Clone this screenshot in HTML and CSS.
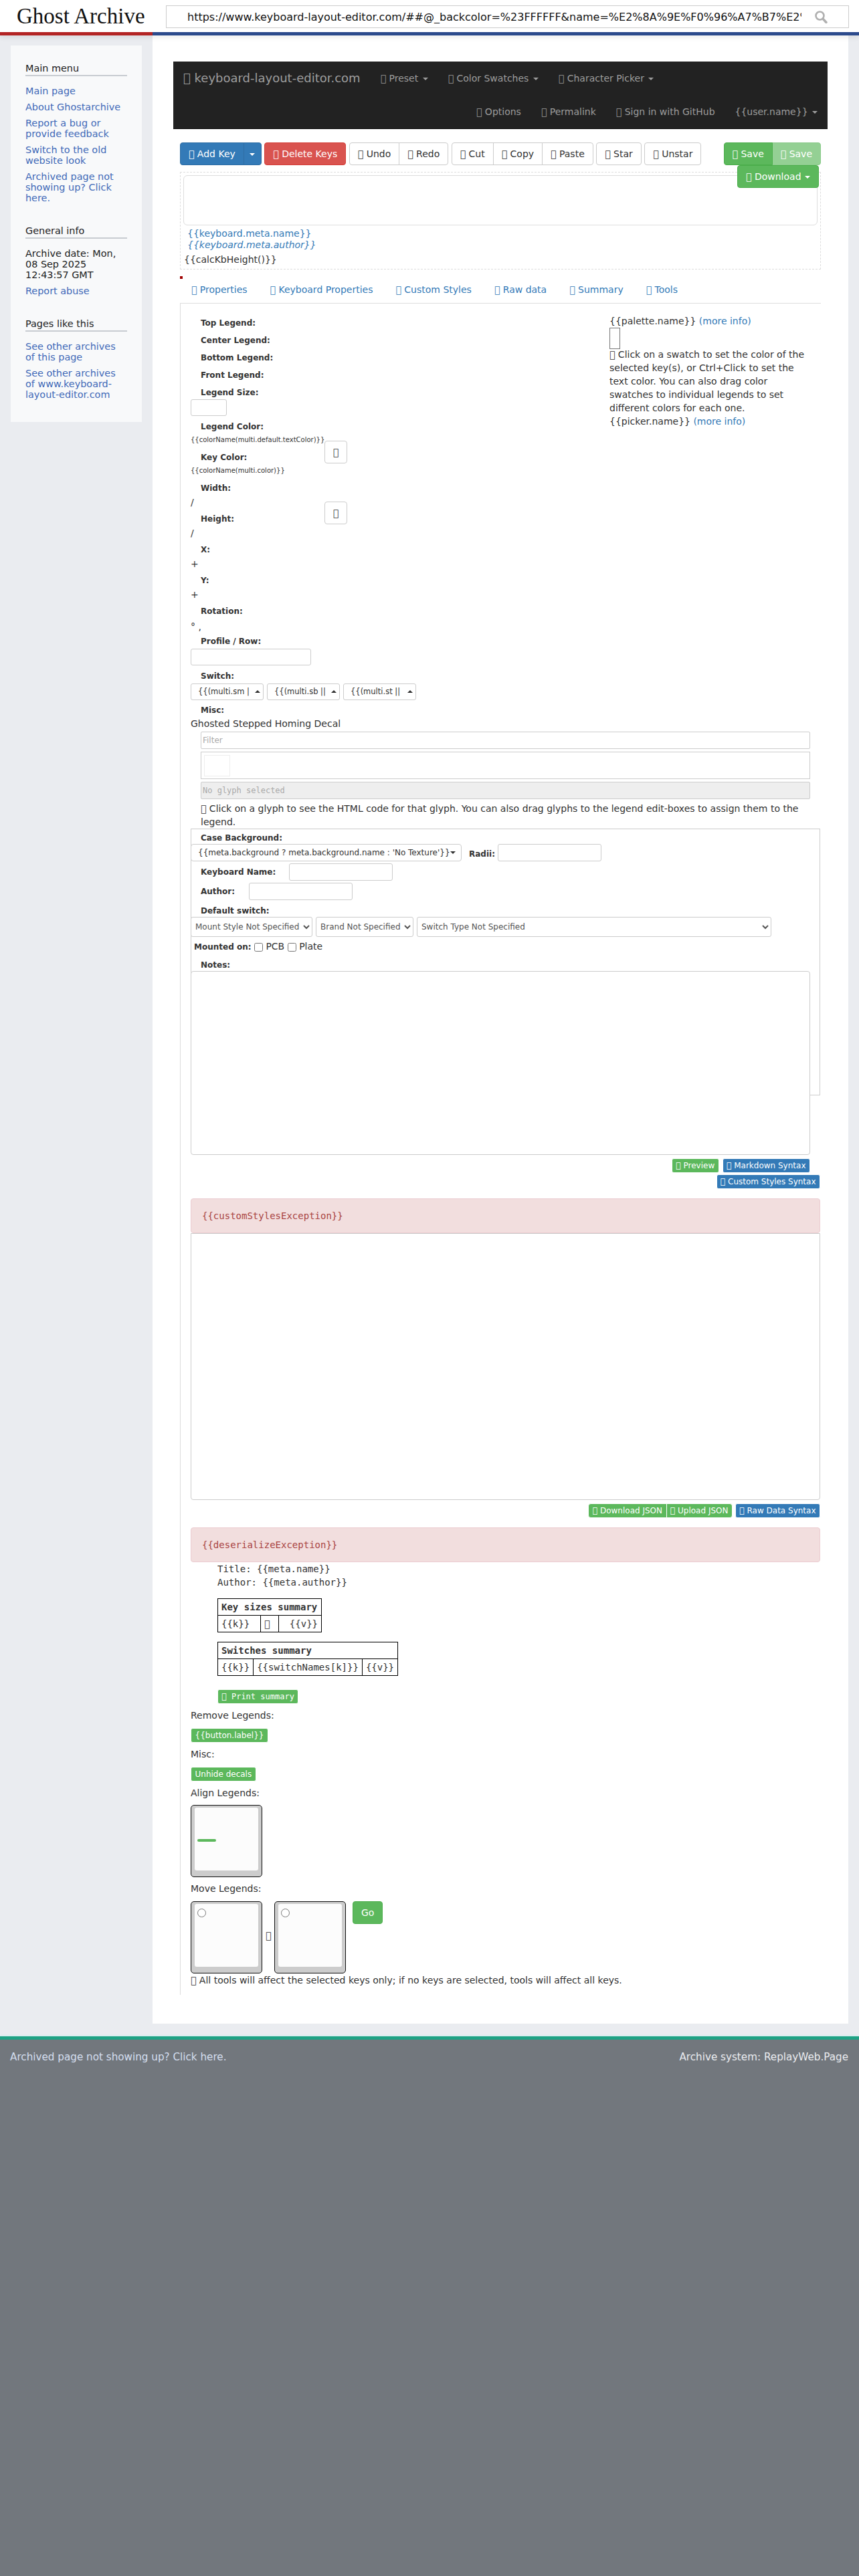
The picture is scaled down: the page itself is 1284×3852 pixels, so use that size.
FILE: index.html
```html
<!DOCTYPE html>
<html lang="en">
<head>
<meta charset="utf-8">
<title>Ghost Archive</title>
<link rel="stylesheet" href="styles.css">
</head>
<body>
<header class="topbar">
  <div class="logo">Ghost Archive</div>
  <div class="search">
    <input class="search-input" type="text" value="https://www.keyboard-layout-editor.com/##@_backcolor=%23FFFFFF&amp;name=%E2%8A%9E%F0%96%A7%B7%E2%8A%9E%F0%96%A7%B7%E2%8A%9E%F0%96%A7%B7%E2%8A%9E">
    <svg class="search-icon" width="20" height="20" viewBox="0 0 20 20"><circle cx="8.5" cy="8.5" r="6" fill="none" stroke="#b0b0b0" stroke-width="2.6"/><path d="M13 13l5 5.5" stroke="#b0b0b0" stroke-width="3.4" stroke-linecap="round"/></svg>
  </div>
</header>
<div class="shell">
  <aside class="sidebar">
    <div class="card">
      <h3 class="side-h">Main menu</h3>
      <ul class="side-list">
        <li><a>Main page</a></li>
        <li><a>About Ghostarchive</a></li>
        <li><a>Report a bug or provide feedback</a></li>
        <li><a>Switch to the old website look</a></li>
        <li><a>Archived page not showing up? Click here.</a></li>
      </ul>
      <h3 class="side-h">General info</h3>
      <ul class="side-list">
        <li>Archive date: Mon, 08 Sep 2025 12:43:57 GMT</li>
        <li><a>Report abuse</a></li>
      </ul>
      <h3 class="side-h">Pages like this</h3>
      <ul class="side-list">
        <li><a>See other archives of this page</a></li>
        <li><a>See other archives of www.keyboard-layout-editor.com</a></li>
      </ul>
    </div>
  </aside>
  <main class="content">
    <nav class="navbar">
      <div class="nav-row">
        <span class="brand">&#xe001; keyboard-layout-editor.com</span>
        <span>&#xe001; Preset <i class="caret"></i></span>
        <span>&#xe001; Color Swatches <i class="caret"></i></span>
        <span>&#xe001; Character Picker <i class="caret"></i></span>
      </div>
      <div class="nav-row nav-right">
        <span>&#xe001; Options</span>
        <span>&#xe001; Permalink</span>
        <span>&#xe001; Sign in with GitHub</span>
        <span>{{user.name}} <i class="caret"></i></span>
      </div>
    </nav>
    <div class="work">
      <div class="toolbar">
        <div class="group">
          <button class="btn primary">&#xe001; Add Key</button><button class="btn primary split"><i class="caret"></i></button>
        </div>
        <button class="btn danger">&#xe001; Delete Keys</button>
        <div class="group">
          <button class="btn">&#xe001; Undo</button><button class="btn">&#xe001; Redo</button>
        </div>
        <div class="group">
          <button class="btn">&#xe001; Cut</button><button class="btn">&#xe001; Copy</button><button class="btn">&#xe001; Paste</button>
        </div>
        <button class="btn">&#xe001; Star</button>
        <button class="btn">&#xe001; Unstar</button>
        <div class="group save-group">
          <button class="btn success">&#xe001; Save</button><button class="btn success faded">&#xe001; Save</button>
        </div>
      </div>
      <div class="download-row"><button class="btn success">&#xe001; Download <i class="caret"></i></button></div>
      <div class="kb-wrap">
        <div class="kb"></div>
        <div class="meta-name">{{keyboard.meta.name}}</div>
        <div class="meta-author">{{keyboard.meta.author}}</div>
        <div class="calc">{{calcKbHeight()}}</div>
      </div>
      <div class="red-dot"></div>
      <div class="tabs">
        <a>&#xe001; Properties</a>
        <a>&#xe001; Keyboard Properties</a>
        <a>&#xe001; Custom Styles</a>
        <a>&#xe001; Raw data</a>
        <a>&#xe001; Summary</a>
        <a>&#xe001; Tools</a>
      </div>
      <div class="panel">
        <div class="props">
          <div class="props-left">
            <div class="lab">Top Legend:</div>
            <div class="lab">Center Legend:</div>
            <div class="lab">Bottom Legend:</div>
            <div class="lab">Front Legend:</div>
            <div class="lab">Legend Size:</div>
            <input class="field size-field" type="text">
            <div class="colors">
              <div class="colors-left">
                <div class="lab">Legend Color:</div>
                <div class="color-name">{{colorName(multi.default.textColor)}}</div>
                <div class="lab lab-key">Key Color:</div>
                <div class="color-name">{{colorName(multi.color)}}</div>
                <div class="lab lab-w">Width:</div>
                <div class="unit">/</div>
                <div class="lab lab-h">Height:</div>
                <div class="unit">/</div>
                <div class="lab lab-h">X:</div>
                <div class="unit">+</div>
                <div class="lab lab-h">Y:</div>
                <div class="unit">+</div>
                <div class="lab lab-h">Rotation:</div>
                <div class="unit rot">° ,</div>
              </div>
              <div class="colors-right">
                <button class="btn icon-btn">&#xe001;</button>
                <button class="btn icon-btn second">&#xe001;</button>
              </div>
            </div>
            <div class="lab">Profile / Row:</div>
            <input class="field profile-field" type="text">
            <div class="lab">Switch:</div>
            <div class="switch-row">
              <button class="drop">{{(multi.sm |<i class="caret up"></i></button>
              <button class="drop">{{(multi.sb ||<i class="caret up"></i></button>
              <button class="drop">{{(multi.st ||<i class="caret up"></i></button>
            </div>
            <div class="lab lab-misc">Misc:</div>
          </div>
          <div class="props-right">
            <div>{{palette.name}} <a class="info">(more info)</a></div>
            <div class="swatch"></div>
            <div>&#xe001; Click on a swatch to set the color of the selected key(s), or Ctrl+Click to set the text color. You can also drag color swatches to individual legends to set different colors for each one.</div>
            <div>{{picker.name}} <a class="info">(more info)</a></div>
          </div>
        </div>
        <div class="decal">Ghosted Stepped Homing Decal</div>
        <div class="glyphs">
          <input class="field filter" type="text" placeholder="Filter">
          <div class="glyph-box"><div class="glyph-cell"></div></div>
          <input class="field noglyph" type="text" placeholder="No glyph selected" disabled>
          <div class="glyph-note">&#xe001; Click on a glyph to see the HTML code for that glyph. You can also drag glyphs to the legend edit-boxes to assign them to the legend.</div>
        </div>
        <div class="kprops">
          <div class="lab">Case Background:</div>
          <div class="case-row">
            <button class="drop case-drop">{{meta.background ? meta.background.name : 'No Texture'}}<i class="caret"></i></button>
            <span class="inline-lab radii">Radii:</span>
            <input class="field medium" type="text">
          </div>
          <div class="name-row name-kb"><span class="inline-lab">Keyboard Name:</span><input class="field medium" type="text"></div>
          <div class="name-row name-au"><span class="inline-lab">Author:</span><input class="field medium" type="text"></div>
          <div class="lab lab-default">Default switch:</div>
          <div class="select-row">
            <select class="sel sel-a"><option>Mount Style Not Specified</option></select>
            <select class="sel sel-b"><option>Brand Not Specified</option></select>
            <select class="sel sel-c"><option>Switch Type Not Specified</option></select>
          </div>
          <div class="mounted"><b>Mounted on:</b> <input type="checkbox"> PCB <input type="checkbox"> Plate</div>
          <div class="lab lab-notes">Notes:</div>
          <textarea class="notes"></textarea>
        </div>
        <div class="btn-row row-preview">
          <button class="xs success">&#xe001; Preview</button>
          <button class="xs primary">&#xe001; Markdown Syntax</button>
        </div>
        <div class="btn-row row-custom">
          <button class="xs primary">&#xe001; Custom Styles Syntax</button>
        </div>
        <div class="alert alert-a">{{customStylesException}}</div>
        <textarea class="styles"></textarea>
        <div class="btn-row row-raw">
          <div class="group">
            <button class="xs success">&#xe001; Download JSON</button><button class="xs success">&#xe001; Upload JSON</button>
          </div>
          <button class="xs primary">&#xe001; Raw Data Syntax</button>
        </div>
        <div class="alert alert-b">{{deserializeException}}</div>
        <div class="summary">
          <div>Title: {{meta.name}}</div>
          <div>Author: {{meta.author}}</div>
          <table class="sum-table t-keys">
            <tr><th colspan="3">Key sizes summary</th></tr>
            <tr><td class="c-k">{{k}}</td><td class="c-i">&#xe001;</td><td class="c-v">{{v}}</td></tr>
          </table>
          <table class="sum-table t-switch">
            <tr><th colspan="3">Switches summary</th></tr>
            <tr><td>{{k}}</td><td>{{switchNames[k]}}</td><td>{{v}}</td></tr>
          </table>
          <button class="xs success print">&#xe001; Print summary</button>
        </div>
        <div class="tool-h">Remove Legends:</div>
        <button class="xs success tool-btn">{{button.label}}</button>
        <div class="tool-h">Misc:</div>
        <button class="xs success tool-btn">Unhide decals</button>
        <div class="tool-h">Align Legends:</div>
        <div class="key"><div class="key-top"><div class="align-bar"></div></div></div>
        <div class="tool-h">Move Legends:</div>
        <div class="move-row">
          <div class="key"><div class="key-top"><input class="radio" type="radio"></div></div>
          <span class="arrow">&#xe001;</span>
          <div class="key"><div class="key-top"><input class="radio" type="radio"></div></div>
          <button class="btn success go">Go</button>
        </div>
        <div class="tool-note">&#xe001; All tools will affect the selected keys only; if no keys are selected, tools will affect all keys.</div>
      </div>
    </div>
  </main>
</div>
<footer class="footer">
  <a class="foot-link">Archived page not showing up? Click here.</a>
  <span class="foot-right">Archive system: ReplayWeb.Page</span>
</footer>
</body>
</html>
```
FILE: styles.css
```css
* { box-sizing: border-box; }
html, body { margin: 0; padding: 0; }
body {
  min-height: 3852px;
  display: flex;
  flex-direction: column;
  background: #eaecf0;
  color: #333;
  font: 14px/20px "DejaVu Sans", sans-serif;
}
a { color: #337ab7; }
button, input, select, textarea { font-family: "DejaVu Sans", sans-serif; }
input::placeholder { color: #aaa; }

/* top bar */
.topbar {
  height: 53px;
  display: flex;
  background: #fff;
  border-bottom: 5px solid #2c4a8c;
  position: relative;
  box-shadow: 0 3px 8px rgba(0,0,0,.08);
}
.topbar::after {
  content: "";
  position: absolute;
  left: 0;
  bottom: -5px;
  width: 228px;
  height: 5px;
  background: #b32424;
}
.logo {
  width: 248px;
  padding-left: 25px;
  font: 33px/48px "Liberation Serif", serif;
  color: #111;
  white-space: nowrap;
}
.search { position: relative; width: 1021px; margin-top: 8px; height: 34px; }
.search-input {
  width: 100%;
  height: 34px;
  border: 1px solid #ccc;
  padding: 0 70px 0 31px;
  font-size: 16px;
  color: #111;
  background: #fff;
}
.search-icon { position: absolute; right: 32px; top: 7px; }

/* shell */
.shell { display: grid; grid-template-columns: 228px 1040px; }
.sidebar { padding: 15px 0 0 16px; }
.card {
  width: 196px;
  height: 563px;
  background: #f8f9fa;
  padding: 26px 22px 0;
  color: #202122;
}
.side-h {
  margin: 0 0 14px;
  font-size: 14.4px;
  font-weight: 400;
  line-height: 16px;
  padding-bottom: 2px;
  border-bottom: 2px solid #c8ccd1;
  color: #202122;
}
.side-list { list-style: none; margin: 0; padding: 0 0 25px; font-size: 14.4px; line-height: 16px; }
.side-list li { margin-bottom: 8px; }
.side-list a { color: #4169b8; }

.content { background: #fff; padding: 39px 0 45px 31px; height: 2973px; }

/* navbar */
.navbar {
  width: 978px;
  height: 101px;
  background: #222;
  border-bottom: 1px solid #080808;
  color: #9d9d9d;
}
.nav-row { height: 50px; display: flex; align-items: center; gap: 30px; padding: 0 15px; }
.nav-right { justify-content: flex-end; }
.brand { font-size: 18px; }
.caret {
  display: inline-block;
  width: 0;
  height: 0;
  margin-left: 2px;
  vertical-align: middle;
  border-top: 4px solid currentColor;
  border-left: 4px solid transparent;
  border-right: 4px solid transparent;
}
.caret.up { border-top: 0; border-bottom: 4px solid currentColor; }

/* buttons */
.work { width: 968px; padding-left: 10px; }
.btn {
  height: 34px;
  padding: 6px 12px;
  font-size: 14px;
  line-height: 20px;
  color: #333;
  background: #fff;
  border: 1px solid #ccc;
  border-radius: 4px;
  white-space: nowrap;
}
.primary { background: #337ab7; border-color: #2e6da4; color: #fff; }
.danger { background: #d9534f; border-color: #d43f3a; color: #fff; }
.success { background: #5cb85c; border-color: #4cae4c; color: #fff; }
.faded { opacity: .65; }
.group { display: flex; }
.group > * { border-radius: 0; margin-left: -1px; }
.group > *:first-child { border-radius: 4px 0 0 4px; margin-left: 0; }
.group > *:last-child { border-radius: 0 4px 4px 0; }
.split { width: 27px; padding: 0; }
.split .caret { margin-left: 0; }
.toolbar { display: flex; gap: 4.5px; margin-top: 20px; }
.save-group { margin-left: auto; }
.download-row {
  display: flex;
  justify-content: flex-end;
  padding-right: 3px;
  height: 34px;
  margin-bottom: -24px;
  position: relative;
}
.download-row .caret { margin-left: 1px; }
.kb-wrap {
  height: 146px;
  border: 1px dashed #ddd;
  padding: 4px;
}
.kb { height: 75px; border: 1px solid #ddd; border-radius: 6px; margin-bottom: 2px; }
.meta-name { color: #337ab7; padding-left: 6px; line-height: 20px; }
.meta-author { color: #337ab7; padding-left: 6px; font-style: italic; margin-top: -3px; }
.calc { margin-top: 2px; padding-left: 1px; }
.red-dot { width: 4px; height: 4px; margin-top: 10px; background: #a00000; }
.tabs {
  display: flex;
  gap: 2px;
  height: 42px;
  margin-top: -5px;
  padding: 11px 0 0 1px;
  border-bottom: 1px solid #ddd;
}
.tabs a { padding: 0 16px; color: #337ab7; }

/* panel */
.panel { border-left: 1px solid #ddd; padding-left: 15px; height: 2529px; }
.props { display: grid; grid-template-columns: 626px 300px; padding-top: 16px; height: 621px; }
.lab { height: 26px; line-height: 26px; padding-left: 15px; font-size: 12px; font-weight: 700; }
.field {
  display: block;
  height: 25px;
  border: 1px solid #ccc;
  border-radius: 3px;
  background: #fff;
}
.size-field { width: 54px; margin: -3px 0 2.5px; }
.profile-field { width: 180px; margin-top: -2px; margin-bottom: 3px; }
.colors { display: grid; grid-template-columns: 200px 40px; height: 321px; }
.color-name { height: 14px; line-height: 14px; font-size: 10px; white-space: nowrap; }
.lab-key { margin-top: 6px; }
.lab-w { margin-top: 6px; }
.lab-h { margin-top: 4px; }
.unit { height: 16px; line-height: 16px; }
.rot { height: 20px; line-height: 20px; }
.colors-right { padding-top: 34px; display: flex; flex-direction: column; align-items: flex-start; }
.icon-btn { width: 34px; padding: 0; }
.second { margin-top: 57px; }
.switch-row { display: flex; gap: 5px; margin-top: -2px; }
.drop {
  position: relative;
  width: 109px;
  height: 25px;
  padding: 0 0 0 10px;
  border: 1px solid #ccc;
  border-radius: 3px;
  background: #fff;
  color: #333;
  font-size: 11.5px;
  text-align: left;
  white-space: nowrap;
  display: flex;
  align-items: center;
  justify-content: space-between;
}
.drop .caret { margin: 0 4px 0 0; }
.lab-misc { margin-top: 2.5px; }
.swatch { width: 16px; height: 32px; border: 1px solid #777; margin: 0 0 -2px; }
.props-right { padding-top: 0; }
.decal { margin-top: -3px; height: 20px; }
.glyphs { padding: 2px 15px 0 15px; width: 941px; }
.filter { width: 100%; height: 26px; font-size: 12px; padding: 0 2px; border-radius: 2px; }
.glyph-box { height: 41px; margin-top: 4px; border: 1px solid #ccc; padding: 4px; }
.glyph-cell { width: 39px; height: 32px; border: 1px solid #eee; }
.noglyph {
  width: 100%;
  height: 26px;
  margin-top: 4px;
  background: #eee;
  font-family: "DejaVu Sans Mono", monospace;
  font-size: 12px;
  padding: 0 2px;
  border-radius: 2px;
}
.glyph-note { padding-top: 4px; height: 44px; }
.kprops { height: 399px; width: 941px; box-shadow: inset 0 0 0 1px #ccc; padding-top: 1px; }
.case-row { display: flex; align-items: center; margin-top: -4px; height: 26px; }
.case-drop { width: 405px; height: 26px; font-size: 12px; border-radius: 4px; }
.case-drop .caret { margin-right: 10px; }
.inline-lab { font-size: 12px; font-weight: 700; }
.radii { margin: 4px 4px 0 11px; width: 39px; }
.medium { width: 155px; height: 26px; }
.name-row { display: flex; align-items: center; height: 26px; padding-left: 15px; }
.name-kb { margin-top: 3px; gap: 20px; }
.name-au { margin-top: 3px; gap: 21px; }
.lab-default { margin-top: 3px; }
.select-row { display: flex; gap: 5px; margin-top: -4px; }
.sel {
  height: 30px;
  padding-left: 2px;
  border: 1px solid #ccc;
  border-radius: 3px;
  background: #fff;
  color: #555;
  font-size: 12px;
}
.sel-a { width: 182px; }
.sel-b { width: 146px; }
.sel-c { width: 530px; }
.mounted { padding-left: 5px; margin-top: 4px; }
.mounted b { font-size: 12px; }
.mounted input { margin: 0; vertical-align: -3px; }
.lab-notes { margin-top: 4px; }
.notes {
  display: block;
  width: 926px;
  height: 275px;
  margin-top: -4px;
  border: 1px solid #ccc;
  border-radius: 4px;
  background: #fff;
  resize: none;
}
.btn-row { display: flex; justify-content: flex-end; gap: 5px; width: 941px; }
.row-preview { margin-top: 94px; padding-right: 15px; }
.row-custom { margin-top: 2px; }
.xs {
  height: 22px;
  padding: 0 5.5px;
  font-size: 12px;
  line-height: 18px;
  border: 1px solid;
  border-radius: 3px;
  white-space: nowrap;
}
.alert {
  width: 941px;
  height: 52px;
  border: 1px solid #ebccd1;
  border-radius: 4px;
  background: #f2dede;
  color: #a94442;
  font-family: "DejaVu Sans Mono", monospace;
  line-height: 50px;
  padding-left: 16px;
}
.alert-a { margin-top: 14px; }
.styles {
  display: block;
  width: 941px;
  height: 399px;
  border: 1px solid #ccc;
  border-radius: 0 0 4px 4px;
  background: #fff;
  resize: none;
}
.row-raw { margin-top: 5px; gap: 4px; }
.alert-b { margin-top: 14px; }
.summary { padding-left: 40px; font-family: "DejaVu Sans Mono", monospace; }
.sum-table { border-collapse: collapse; margin-top: 14px; line-height: 24px; }
.t-switch { margin-top: 14px; }
.sum-table th, .sum-table td { border: 1px solid #000; padding: 0 5px; text-align: left; height: 25px; white-space: nowrap; }
.c-k { width: 64px; }
.c-i { width: 27px; }
.c-v { width: 64px; text-align: right !important; }
.print { display: block; margin-top: 20px; font-family: "DejaVu Sans Mono", monospace; }
.tool-h { margin-top: 7px; height: 20px; }
.tool-btn { display: block; margin-top: 9px; }
.key {
  width: 107px;
  height: 108px;
  border: 1px solid #111;
  border-radius: 5px;
  background: #ccc;
  padding: 3px 5px;
  margin-top: 8px;
}
.key-top { height: 94px; border-radius: 3px; background: #fcfcfc; padding: 7px 4px 0; }
.align-bar { width: 28px; height: 4px; border-radius: 2px; background: #5cb85c; margin-top: 40px; }
.move-row { display: flex; align-items: flex-start; margin-top: 9px; }
.move-row .key { margin-top: 0; }
.radio { margin: 0; display: block; width: 13px; height: 13px; }
.arrow { width: 18px; margin: 0; padding: 41px 0 0 5px; }
.go { margin-left: 10px; }
.tool-note { height: 20px; }

/* footer */
.footer {
  flex: 1;
  margin-top: 19px;
  padding: 18px 16px 0 15px;
  display: flex;
  justify-content: space-between;
  background: #72777d;
  border-top: 5px solid #1fa284;
  font-size: 15.2px;
  line-height: 16px;
  box-shadow: 0 -1px 2px rgba(180,240,235,.6);
}
.foot-link { color: #d5dff0; }
.foot-right { color: #eaecf0; }
```
